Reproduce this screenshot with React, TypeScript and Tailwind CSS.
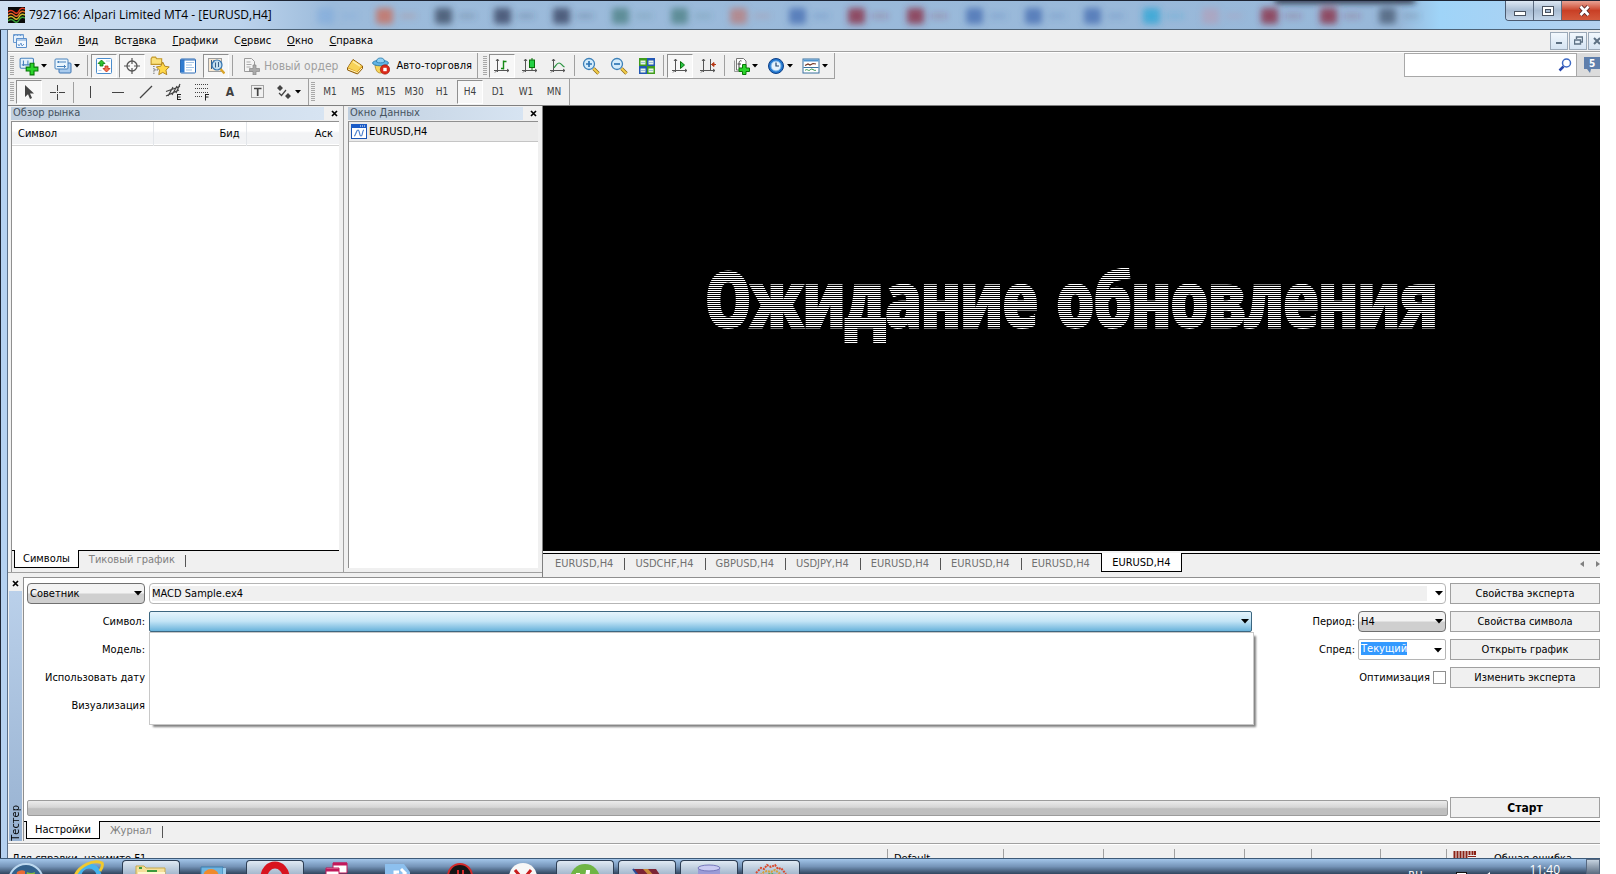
import React, { useState } from "react";

type IconProps = { children: React.ReactNode; size?: number };

function Icon({ children, size = 18 }: IconProps) {
  return (
    <svg width={size} height={size} viewBox="0 0 18 18" fill="none" className="shrink-0" aria-hidden="true">
      {children}
    </svg>
  );
}

function Caret() {
  return (
    <svg width="6" height="4" viewBox="0 0 6 4" className="shrink-0" aria-hidden="true">
      <path d="M0 0h6L3 3.5z" fill="#000" />
    </svg>
  );
}

function ComboArrow() {
  return (
    <svg width="8" height="5" viewBox="0 0 8 5" className="pointer-events-none absolute right-[3px] top-2" aria-hidden="true">
      <path d="M0 0h8L4 4.6z" fill="#000" />
    </svg>
  );
}

function Grip() {
  return (
    <div className="mx-0.5 h-5 w-1 shrink-0 self-center bg-[repeating-linear-gradient(to_bottom,#a8a8a8_0px,#a8a8a8_1px,#f0f0f0_1px,#f0f0f0_2px)]" />
  );
}

function Separator({ wide }: { wide?: boolean }) {
  return <div className={`${wide ? "mx-[3px]" : "mx-px"} h-[21px] w-px shrink-0 self-center bg-[#a0a0a0]`} />;
}

type ToolButtonProps = { label: string; pressed?: boolean; children: React.ReactNode };

function ToolButton({ label, pressed, children }: ToolButtonProps) {
  return (
    <button
      aria-label={label}
      className={`flex h-6 w-[26px] shrink-0 items-center justify-center text-[10px] text-[#404040] ${
        pressed ? "border border-t-[#8f8f8f] border-l-[#8f8f8f] border-r-white border-b-white bg-[#f7f7f7]" : ""
      }`}
    >
      {children}
    </button>
  );
}

function MenuToolButton({ label, children }: { label: string; children: React.ReactNode }) {
  return (
    <button aria-label={label} className="flex h-6 w-[34px] shrink-0 items-center justify-center gap-0.5">
      {children}
      <Caret />
    </button>
  );
}

function Axes() {
  return <path d="M4.500 2v13M1 13.500h15M3 4l1.500-2L6 4M14 12l2 1.500-2 1.500M2 15.500l2-2" stroke="#555" />;
}

const icons = {
  newChart: (
    <Icon size={20}>
      <rect x="1" y="2" width="12" height="9" rx="1" fill="#e4f1fc" stroke="#4a83bd" />
      <path d="M4 4v5M2.500 8h8M8 4v4" stroke="#4a83bd" />
      <path d="M10 6.500h3.500V10H17v3.500h-3.500V17H10v-3.500H6.500V10H10z" fill="#2bd52b" stroke="#067806" />
    </Icon>
  ),
  profiles: (
    <Icon>
      <rect x="5" y="6" width="12" height="10" rx="1" fill="#a9cbee" stroke="#3c74b3" />
      <rect x="1" y="2" width="13" height="10" rx="1" fill="#e8f4fd" stroke="#4a83bd" />
      <path d="M3 5h9M3 9.500h9M4.500 4v2M10.500 8v3" stroke="#4a83bd" />
    </Icon>
  ),
  marketWatch: (
    <Icon>
      <rect x="1.500" y="1.500" width="15" height="15" rx="1" fill="#fff" stroke="#4a8ccc" />
      <path d="M6.500 3 3 6.500h2V9h3V6.500h2z" fill="#31c331" stroke="#0b7d0b" strokeWidth=".8" />
      <path d="m11.500 15 3.500-3.500h-2V9h-3v2.500H8z" fill="#f27654" stroke="#c22f13" strokeWidth=".8" />
      <path d="M11 4h4M3.500 13.500h3" stroke="#b9d3ea" />
    </Icon>
  ),
  crosshair: (
    <Icon>
      <circle cx="9" cy="9" r="5" stroke="#555" strokeWidth="1.300" />
      <path d="M9 1v6M9 11v6M1 9h6M11 9h6" stroke="#555" strokeWidth="1.200" />
    </Icon>
  ),
  favorites: (
    <Icon size={20}>
      <path d="M1 2.500 2 1h3l1 1.500h4.500v5H1z" fill="#fbe27c" stroke="#c29728" />
      <path d="M3.500 9v7M4 12.500h4" stroke="#555" strokeDasharray="1 1" />
      <path d="m11.500 5.500 1.800 3.700 4 .6-2.900 2.900.7 4.100-3.600-2-3.600 2 .7-4.100-2.900-2.900 4-.6z" fill="#ffd84a" stroke="#a87b16" strokeWidth=".8" />
    </Icon>
  ),
  dataWindow: (
    <Icon>
      <rect x="1.500" y="2" width="15" height="14" rx="1" fill="#fff" stroke="#2a6ab5" />
      <path d="M2 2.500h3.500v13H2z" fill="#2f7bd0" />
      <path d="M7 5.500h8M7 8h6M7 10.500h8M7 13h6" stroke="#a3c3e4" />
      <path d="M2 3h14" stroke="#2f6fbb" />
    </Icon>
  ),
  tester: (
    <Icon>
      <rect x="1.500" y="1.500" width="13" height="13" fill="#f9e9d2" stroke="#9e9e9e" />
      <path d="M4.500 3v9M7 3v3" stroke="#355d86" />
      <circle cx="10" cy="8" r="5" fill="#b8dcf6cc" stroke="#3576b4" strokeWidth="1.200" />
      <path d="M8.500 5.500v5M11.500 5v5" stroke="#355d86" />
      <path d="m13.500 12 4 4.500" stroke="#d9a42a" strokeWidth="2.300" />
    </Icon>
  ),
  newOrder: (
    <Icon>
      <path d="M2.500 1.500h7l3 3v10h-10z" fill="#f4f4f4" stroke="#9b9b9b" />
      <path d="M4.500 5h4M4.500 7.500h5M4.500 10h4" stroke="#aaa" />
      <path d="M11 8h3v3.500h3.500v3H14V18h-3v-3.500H7.500v-3H11z" fill="#aaa" stroke="#888" strokeWidth=".7" />
    </Icon>
  ),
  editor: (
    <Icon>
      <path d="M1.500 11 7 2.500 16.500 9v2.500l-5 5.500-10-4z" fill="#dda025" stroke="#8e5e10" />
      <path d="M2 10.500 7 3l9 6-5 5.500z" fill="#f7d257" />
      <path d="m2 12 9.500 3.700L16 11" stroke="#fff4bd" />
      <path d="m7 4.500 7 4.500" stroke="#ffeda3" strokeWidth="1.500" />
    </Icon>
  ),
  autoTrading: (
    <Icon>
      <path d="M3 8h11c0 5-2 8-5.500 8S3.500 13 3 8z" fill="#f7d55b" stroke="#b0861d" strokeWidth=".8" />
      <ellipse cx="8.500" cy="6" rx="8" ry="2.800" fill="#62b4e4" stroke="#2577aa" strokeWidth=".8" />
      <path d="M4.500 5c0-3 1.500-4 4-4s4 1 4 4c-2 1.200-6 1.200-8 0z" fill="#8fd0f4" stroke="#2577aa" strokeWidth=".8" />
      <circle cx="13" cy="12.500" r="4.700" fill="#dc2a1a" stroke="#991509" strokeWidth=".6" />
      <rect x="11.300" y="10.800" width="3.400" height="3.400" fill="#fff" />
    </Icon>
  ),
  bars: (
    <Icon>
      <Axes />
      <path d="M10.500 3.500v9M10.500 4.500h3M8 11.500h2.500" stroke="#168a16" strokeWidth="1.400" />
    </Icon>
  ),
  candles: (
    <Icon>
      <Axes />
      <path d="M11 1v12" stroke="#087008" />
      <rect x="8.500" y="3" width="5" height="7.500" fill="#24d045" stroke="#087008" />
    </Icon>
  ),
  line: (
    <Icon>
      <Axes />
      <path d="M4.500 11c2-1 3-5 5.500-5s3 3 5.500 4" stroke="#2b9442" strokeWidth="1.200" />
    </Icon>
  ),
  zoomIn: (
    <Icon>
      <circle cx="7" cy="7" r="5.500" fill="#d4ecfb" stroke="#3d80b8" strokeWidth="1.300" />
      <path d="M7 4v6M4 7h6" stroke="#2f76b5" strokeWidth="1.700" />
      <path d="m11.500 11.500 5 5" stroke="#8e6a16" strokeWidth="3.400" />
      <path d="m11.500 11.500 5 5" stroke="#f3cf4b" strokeWidth="2" />
    </Icon>
  ),
  zoomOut: (
    <Icon>
      <circle cx="7" cy="7" r="5.500" fill="#d4ecfb" stroke="#3d80b8" strokeWidth="1.300" />
      <path d="M4 7h6" stroke="#2f76b5" strokeWidth="1.700" />
      <path d="m11.500 11.500 5 5" stroke="#8e6a16" strokeWidth="3.400" />
      <path d="m11.500 11.500 5 5" stroke="#f3cf4b" strokeWidth="2" />
    </Icon>
  ),
  tile: (
    <Icon>
      <path d="M1 1h8v8H1zM9 9h8v8H9z" fill="#3f9c1c" />
      <path d="M9 1h8v8H9zM1 9h8v8H1z" fill="#2257b4" />
      <path d="M2.500 3.500h5v4h-5zM10.500 3.500h5v4h-5zM2.500 11.500h5v4h-5zM10.500 11.500h5v4h-5z" fill="#eaf5e6" />
      <path d="M3 5.500h4M11 5.500h4M3 13.500h4M11 13.500h4" stroke="#9fc0d8" />
    </Icon>
  ),
  autoScroll: (
    <Icon>
      <Axes />
      <path d="m9.500 4.500 4 3.500-4 3.500z" fill="#26c646" stroke="#087008" />
    </Icon>
  ),
  shift: (
    <Icon>
      <Axes />
      <path d="M11.500 2v11" stroke="#555" />
      <path d="M17 7.500h-4.500M15 5.500l-2.500 2 2.500 2z" fill="#b73916" stroke="#b73916" />
    </Icon>
  ),
  indicators: (
    <Icon>
      <path d="M4.500 1.500h7L14 4v9H4.500z" fill="#fff" stroke="#777" />
      <path d="M2.500 3.500v11h8" stroke="#999" />
      <path d="M9.500 4c-2-1-2.500 1-2.500 3v4M5.500 7H9" stroke="#444" />
      <path d="M10.500 7.500H14V11h3.500v3.500H14V17.500h-3.500v-3H7V11h3.500z" fill="#2bd52b" stroke="#067806" />
    </Icon>
  ),
  periods: (
    <Icon>
      <circle cx="9" cy="9" r="7.500" fill="#2277cf" stroke="#0e3f86" />
      <circle cx="9" cy="9" r="5" fill="#e5f3fd" stroke="#79b4e8" />
      <path d="M9 5.500V9h3" stroke="#24466d" strokeWidth="1.200" />
    </Icon>
  ),
  templates: (
    <Icon>
      <rect x="1" y="2" width="16" height="14" fill="#fff" stroke="#39719f" />
      <path d="M1.500 3.500h15" stroke="#4f95d0" strokeWidth="2" />
      <path d="M3 8.500 6 7l2 1 3-1.500 3 .5" stroke="#6d3322" strokeWidth="1.200" />
      <path d="M1.500 10.500h15" stroke="#39719f" />
      <path d="M3 13.500c2-2 3 0 4 0s2-2.500 4-1 2 .5 3 1" stroke="#2a9440" />
    </Icon>
  ),
  cursor: (
    <Icon>
      <path d="M5 2v12l3-2.800L10 16l2-1-2-4.500h4z" fill="#444" />
    </Icon>
  ),
  cross: (
    <Icon>
      <path d="M9.500 2v6M9.500 11v6M2 9.500h6M11 9.500h6" stroke="#444" />
      <path d="M9 9h1v1H9z" fill="#444" />
    </Icon>
  ),
  vline: (
    <Icon>
      <path d="M9.500 3v12" stroke="#444" />
    </Icon>
  ),
  hline: (
    <Icon>
      <path d="M3 9.500h12" stroke="#444" />
    </Icon>
  ),
  trend: (
    <Icon>
      <path d="M3 15 15 3" stroke="#444" strokeWidth="1.200" />
    </Icon>
  ),
  channel: (
    <Icon>
      <path d="m1 8.500 14-5M1 13l13-6M3 13 8 4M7 12l5-9M11 10l4-9" stroke="#444" strokeWidth="1.200" />
      <path d="M12.500 11v6M12 11.500h4M12 14h3.500M12 16.500h4" stroke="#222" />
    </Icon>
  ),
  fibo: (
    <Icon>
      <path d="M2 1.500h14M2 5.500h14M2 9.500h14M2 13.500h8" stroke="#444" strokeDasharray="1 1" />
      <path d="M12.500 11v6.500M12 11.500h4M12 14h3.500" stroke="#222" />
    </Icon>
  ),
  label: (
    <Icon>
      <rect x="2.500" y="2.500" width="12" height="12" stroke="#555" strokeDasharray="1 1" />
      <path d="M5 5.500h7.500M8.700 5v8" stroke="#444" strokeWidth="1.700" />
    </Icon>
  ),
  arrows: (
    <Icon>
      <path d="m5 2 3 3-3 3-3-3zM13 10l3 3-3 3-3-3z" fill="#444" />
      <path d="m4 10 2.500 2.500L11 7" stroke="#444" strokeWidth="1.200" />
    </Icon>
  ),
};

const menus = [
  ["", "Ф", "айл"],
  ["", "В", "ид"],
  ["Вст", "а", "вка"],
  ["", "Г", "рафики"],
  ["С", "е", "рвис"],
  ["", "О", "кно"],
  ["", "С", "правка"],
];

const timeframes = ["M1", "M5", "M15", "M30", "H1", "H4", "D1", "W1", "MN"];

const chartTabs = ["EURUSD,H4", "USDCHF,H4", "GBPUSD,H4", "USDJPY,H4", "EURUSD,H4", "EURUSD,H4", "EURUSD,H4", "EURUSD,H4"];

// Colours of the browser bookmarks that shine through the glass title bar
const glass = [
  "#6f9fdc", "#c8705f", "#3f5068", "#3b4766", "#3b4766", "#4f8288", "#4f8288", "#b87f80", "#4a72b4",
  "#8c2f48", "#8c2f48", "#4a72b4", "#4a72b4", "#4a72b4", "#2fa6d6", "#c58ba2", "#8c2f48", "#8c2f48", "#4c5f78",
];

function TitleBar() {
  return (
    <header className="relative flex h-[30px] shrink-0 items-start justify-between overflow-hidden border-t border-b border-t-[#1d2433] border-b-[#4d6276] bg-[linear-gradient(to_right,#cfe0f2_0px,#bcd3ec_240px,#9cbbdb_330px,#98b8d9_1400px,#9fd4f8_1440px,#b3d0ef)]">
      <svg className="absolute inset-0 h-full w-full" aria-hidden="true">
        <defs>
          <filter id="soft" x="-50%" y="-50%" width="200%" height="200%">
            <feGaussianBlur stdDeviation="3" />
          </filter>
        </defs>
        <g filter="url(#soft)">
          {glass.map((color, i) => (
            <g key={i} fill={color}>
              <rect x={317 + i * 59} y="7" width="17" height="16" rx="3" opacity={i === 0 || i === 15 ? 0.4 : 0.8} />
              <rect x={341 + i * 59} y="13" width="16" height="4" opacity="0.3" />
            </g>
          ))}
          <rect x="1275" y="-4" width="140" height="6" fill="#1d2433" />
        </g>
      </svg>
      <div className="relative flex items-center gap-1 pl-2 pt-1.5">
        <svg width="17" height="16" viewBox="0 0 17 16" aria-hidden="true">
          <path d="M0 0h17v16H0z" fill="#0a0a0a" />
          <path d="M0 5q3-3 6 0t5-1 6-2" stroke="#e33b22" strokeWidth="1.500" fill="none" />
          <path d="M0 8q3-3 6 0t5-1 6-2" stroke="#e96e28" strokeWidth="1.500" fill="none" />
          <path d="M0 11q3-3 6 0t5-1 6-2" stroke="#c8bd2e" strokeWidth="1.500" fill="none" />
          <path d="M0 14q3-3 6 0t5-1 6-2" stroke="#3ca33a" strokeWidth="1.500" fill="none" />
        </svg>
        <h1 className="font-['Open_Sans',sans-serif] text-xs leading-4 text-black">
          7927166: Alpari Limited MT4 - [EURUSD,H4]
        </h1>
      </div>
      <div className="relative flex h-5 overflow-hidden rounded-bl border-b border-l border-[#4b5a70]">
        <button aria-label="Свернуть" className="flex w-7 items-center justify-center border-r border-[#5c6b80] bg-linear-to-b from-[#dde8f4] via-[#a9bcd3] to-[#c4d6ea]">
          <svg width="12" height="12" aria-hidden="true">
            <rect x=".5" y="6.500" width="11" height="4" fill="#fff" stroke="#4a5361" />
          </svg>
        </button>
        <button aria-label="Развернуть" className="flex w-7 items-center justify-center border-r border-[#5c6b80] bg-linear-to-b from-[#dde8f4] via-[#a9bcd3] to-[#c4d6ea]">
          <svg width="12" height="10" aria-hidden="true">
            <rect x=".5" y=".5" width="11" height="9" fill="#fff" stroke="#4a5361" />
            <rect x="3.500" y="3.500" width="5" height="3" fill="#a9bcd3" stroke="#4a5361" />
          </svg>
        </button>
        <button aria-label="Закрыть" className="flex w-[38px] items-center justify-center bg-linear-to-b from-[#e8a294] via-[#c93f25] to-[#d4593c] pl-2">
          <svg width="14" height="12" viewBox="0 0 14 12" aria-hidden="true">
            <path d="m2.500 1.500 8 8.500m0-8.500-8 8.500" stroke="#5b2a2a" strokeWidth="4.500" />
            <path d="m2.500 1.500 8 8.500m0-8.500-8 8.500" stroke="#fff" strokeWidth="2.700" />
          </svg>
        </button>
      </div>
    </header>
  );
}

function MenuBar() {
  const box = "flex h-[18px] items-center justify-center border border-[#9ba9b8] bg-linear-to-b from-[#f2f8fd] to-[#d5e4f3]";
  return (
    <nav className="flex h-[22px] shrink-0 items-center justify-between border-b border-[#a0a0a0] pl-1">
      <div className="flex items-center">
        <svg width="16" height="16" viewBox="0 0 16 16" fill="none" className="mr-[7px]" aria-hidden="true">
          <path d="M1.500 1.500h10v8h-10z" fill="#e6f1fc" stroke="#6d9bd0" />
          <path d="M1.500 2.500h10" stroke="#6d9bd0" strokeDasharray="2 1" />
          <path d="M4.500 5.500h10v9h-10z" fill="#f2f8ff" stroke="#5b8fcb" />
          <path d="M5 7h9M6 11l1 2 2-3 1 3 2-2" stroke="#6d9bd0" />
        </svg>
        <div className="flex gap-4">
          {menus.map(([before, key, after]) => (
            <button key={key + after} className="leading-5">
              {before}
              <u>{key}</u>
              {after}
            </button>
          ))}
        </div>
      </div>
      <div className="flex gap-px overflow-hidden">
        <button aria-label="Свернуть окно" className={`${box} w-[18px]`}>
          <svg width="8" height="8" aria-hidden="true"><path d="M1 5h6v2H1z" fill="#5d7184" /></svg>
        </button>
        <button aria-label="Восстановить окно" className={`${box} w-[18px]`}>
          <svg width="9" height="9" fill="none" aria-hidden="true">
            <path d="M2.500 3V1h6v5H7M.5 4h6v4h-6z" stroke="#5d7184" strokeWidth="1.400" />
          </svg>
        </button>
        <button aria-label="Закрыть окно" className={`${box} w-[12px] border-r-0 pl-1`}>
          <svg width="8" height="8" aria-hidden="true"><path d="m1 1 6 6m0-6L1 7" stroke="#5d7184" strokeWidth="2" /></svg>
        </button>
      </div>
    </nav>
  );
}

function StandardToolbar() {
  return (
    <div className="flex h-[27px] shrink-0 items-start justify-between border-t border-white">
      <div className="flex h-[26px] items-center border-r border-b border-[#a0a0a0] pr-0.5">
        <div className="flex h-full items-center border-r border-[#a0a0a0] pr-[5px]">
          <Grip />
          <MenuToolButton label="Новый график">{icons.newChart}</MenuToolButton>
          <MenuToolButton label="Профили">{icons.profiles}</MenuToolButton>
          <Separator wide />
          <div className="flex gap-0.5">
            <ToolButton label="Обзор рынка" pressed>{icons.marketWatch}</ToolButton>
            <ToolButton label="Окно данных" pressed>{icons.crosshair}</ToolButton>
            <ToolButton label="Навигатор">{icons.favorites}</ToolButton>
            <ToolButton label="Терминал">{icons.dataWindow}</ToolButton>
            <ToolButton label="Тестер стратегий" pressed>{icons.tester}</ToolButton>
          </div>
          <Separator wide />
          <button className="mr-1 ml-1.5 flex items-center gap-1 text-xs text-[#a0a0a0]">
            {icons.newOrder}
            Новый ордер
          </button>
          <ToolButton label="MetaEditor">{icons.editor}</ToolButton>
          <button className="ml-1 flex items-center gap-1.5">
            {icons.autoTrading}
            Авто-торговля
          </button>
        </div>
        <div className="pl-[3px]">
          <Grip />
        </div>
        <div className="flex gap-0.5">
          <ToolButton label="Бары" pressed>{icons.bars}</ToolButton>
          <ToolButton label="Свечи">{icons.candles}</ToolButton>
          <ToolButton label="Линия">{icons.line}</ToolButton>
          <Separator />
          <ToolButton label="Увеличить">{icons.zoomIn}</ToolButton>
          <ToolButton label="Уменьшить">{icons.zoomOut}</ToolButton>
          <ToolButton label="Расположить окна">{icons.tile}</ToolButton>
          <Separator />
          <ToolButton label="Автопрокрутка" pressed>{icons.autoScroll}</ToolButton>
          <ToolButton label="Сдвиг графика">{icons.shift}</ToolButton>
        </div>
        <Separator wide />
        <div className="flex gap-px">
          <MenuToolButton label="Индикаторы">{icons.indicators}</MenuToolButton>
          <MenuToolButton label="Периоды">{icons.periods}</MenuToolButton>
          <MenuToolButton label="Шаблоны">{icons.templates}</MenuToolButton>
        </div>
      </div>
      <div className="flex h-6 shrink-0">
        <label className="flex w-[173px] items-center border border-[#a8a8a8] bg-white pr-1">
          <input type="search" aria-label="Поиск" className="min-w-0 flex-1 px-1 outline-none" />
          <svg width="14" height="14" viewBox="0 0 14 14" fill="none" aria-hidden="true">
            <circle cx="8.500" cy="5" r="4" stroke="#3f6bc4" strokeWidth="1.500" />
            <path d="M5.500 8.500 1.500 12.500" stroke="#2747ad" strokeWidth="2.500" />
          </svg>
        </label>
        <button aria-label="Сообщения: 5" className="flex w-[23px] items-center justify-end border-b border-[#a8a8a8] bg-[#dcdcdc]">
          <svg width="17" height="17" viewBox="0 0 17 17" aria-hidden="true">
            <path d="M1 1h16v12H8l-1 4-3-4H1z" fill="#5f7fac" />
            <text x="6" y="11" fontSize="10" fontWeight="bold" fill="#fff">5</text>
          </svg>
        </button>
      </div>
    </div>
  );
}

function DrawingToolbar() {
  const [active, setActive] = useState("H4");
  return (
    <div className="flex h-[27px] shrink-0 border-b border-[#808080]">
      <div className="flex items-center border-r border-[#a0a0a0] pr-[3px]">
        <Grip />
        <div className="flex gap-0.5">
          <ToolButton label="Курсор" pressed>{icons.cursor}</ToolButton>
          <ToolButton label="Перекрестие">{icons.cross}</ToolButton>
          <Separator />
          <ToolButton label="Вертикальная линия">{icons.vline}</ToolButton>
          <ToolButton label="Горизонтальная линия">{icons.hline}</ToolButton>
          <ToolButton label="Трендовая линия">{icons.trend}</ToolButton>
          <ToolButton label="Канал">{icons.channel}</ToolButton>
          <ToolButton label="Фибоначчи">{icons.fibo}</ToolButton>
          <ToolButton label="Текст"><span className="text-xs font-bold">A</span></ToolButton>
          <ToolButton label="Метка">{icons.label}</ToolButton>
        </div>
        <MenuToolButton label="Стрелки">{icons.arrows}</MenuToolButton>
      </div>
      <div className="flex items-center border-r border-[#a0a0a0] pr-0.5">
        <Grip />
        <div className="flex gap-0.5">
          {timeframes.map((tf) => (
            <button
              key={tf}
              onClick={() => setActive(tf)}
              className={`h-6 w-[26px] text-[10px] text-[#404040] ${
                tf === active ? "border border-t-[#8f8f8f] border-l-[#8f8f8f] border-r-white border-b-white bg-[#f7f7f7]" : ""
              }`}
            >
              {tf}
            </button>
          ))}
        </div>
      </div>
    </div>
  );
}

function CloseMark() {
  return (
    <svg width="7" height="7" viewBox="0 0 7 7" aria-hidden="true">
      <path d="m1 1 5 5m0-5-5 5" stroke="#000" strokeWidth="1.700" />
    </svg>
  );
}

function PaneTitle({ children }: { children: React.ReactNode }) {
  return (
    <div className="flex h-[15px] shrink-0 items-center gap-1.5">
      <h2 className="h-[13px] flex-1 bg-linear-to-r from-[#c0cfdf] to-[#d7e4f2] pl-0.5 leading-3 text-[#46535f]">
        {children}
      </h2>
      <button aria-label="Закрыть панель" className="px-px">
        <CloseMark />
      </button>
    </div>
  );
}

function MarketWatch() {
  return (
    <section className="mb-1 flex w-[336px] shrink-0 flex-col border-r border-b border-[#a0a0a0] pr-1 pl-[3px]">
      <PaneTitle>Обзор рынка</PaneTitle>
      <div className="flex flex-1 flex-col border-t border-l border-[#8f8f8f]">
        <div className="flex-1 bg-white">
          <table className="w-full table-fixed border-collapse">
            <thead>
              <tr className="h-[23px] border-b border-[#d5d5d5] bg-linear-to-b from-white from-40% to-[#f2f3f5] to-50%">
                <th className="border-r border-[#e3e6ea] pt-0.5 pl-1.5 text-left font-normal">Символ</th>
                <th className="w-[93px] border-r border-[#e3e6ea] pt-0.5 pr-1.5 text-right font-normal">Бид</th>
                <th className="w-[93px] pt-0.5 pr-1.5 text-right font-normal">Аск</th>
              </tr>
            </thead>
          </table>
        </div>
        <div className="flex h-[22px] shrink-0 border-t border-black pl-0.5">
          <button className="-mt-px h-[18px] border border-t-0 border-black bg-white px-2">Символы</button>
          <button className="h-[18px] px-2.5 text-[#808080]">Тиковый график</button>
          <span className="mt-1 h-3 w-px bg-[#555]" />
        </div>
      </div>
    </section>
  );
}

function DataWindow() {
  return (
    <section className="mb-1 flex w-[198px] shrink-0 flex-col border-b border-[#a0a0a0] pr-1 pl-1">
      <PaneTitle>Окно Данных</PaneTitle>
      <div className="mb-1 flex-1 border-t border-l border-[#8f8f8f] bg-white">
        <div className="flex h-5 items-center gap-0.5 border-b border-[#c5c5c5] bg-[#ebebeb] pl-0.5">
          <svg width="16" height="15" viewBox="0 0 16 15" fill="none" aria-hidden="true">
            <rect x=".5" y=".5" width="15" height="14" fill="#fff" stroke="#1b55b3" />
            <path d="M0 0h16v4H0z" fill="#1c5cc7" />
            <path d="M9 2h1M11 2h1M13 2h1" stroke="#fff" />
            <path d="M3 12c2 0 2-6 4-6s1 6 3 6 1-6 3-6" stroke="#4d82cf" strokeWidth="1.200" />
          </svg>
          <span>EURUSD,H4</span>
        </div>
      </div>
    </section>
  );
}

function Chart() {
  const last = chartTabs.length - 1;
  return (
    <section className="flex min-w-0 flex-1 flex-col border-l border-[#808080]">
      <div className="flex flex-1 items-center justify-center border-b-2 border-[#f4f4f4] bg-black pb-[62px]">
        <p className="bg-[repeating-linear-gradient(to_bottom,#fff_0px,#fff_1px,#000_1px,#000_2px)] bg-clip-text font-['Impact','Open_Sans_Condensed',sans-serif] text-[76px] leading-[96px] font-black whitespace-nowrap text-transparent [-webkit-text-stroke:3px_transparent]">
          Ожидание обновления
        </p>
      </div>
      <div className="flex h-6 shrink-0 justify-between border-t border-black">
        <div className="flex">
          {chartTabs.map((tab, i) =>
            i === last ? (
              <button key={i} className="-mt-px h-[19px] w-[81px] border border-t-0 border-black bg-white pt-px">
                {tab}
              </button>
            ) : (
              <div key={i} className="flex h-[19px] items-center text-[#707070]">
                <button className={i === 0 ? "pr-[11px] pl-3" : "pr-[11px] pl-[10px]"}>{tab}</button>
                {i < last - 1 && <span className="h-3 w-px bg-[#555]" />}
              </div>
            )
          )}
        </div>
        <div className="flex items-center gap-3 overflow-hidden pb-1">
          <svg width="4" height="6" aria-hidden="true"><path d="M4 0v6L0 3z" fill="#808080" /></svg>
          <svg width="4" height="6" aria-hidden="true"><path d="M0 0v6l4-3z" fill="#808080" /></svg>
        </div>
      </div>
    </section>
  );
}

const grayCombo =
  "block h-[21px] w-full appearance-none rounded-sm border border-[#707070] bg-linear-to-b from-[#f3f3f3] from-45% to-[#cfcfcf] to-55% px-0.5";
const pushButton = "h-[21px] border border-[#a0a0a0] bg-[#f0f0f0]";

function Tester() {
  const [optimize, setOptimize] = useState(false);
  return (
    <section className="flex shrink-0 border-b border-[#a0a0a0] pb-0.5">
      <div className="flex w-[15px] shrink-0 flex-col items-center">
        <button aria-label="Закрыть тестер" className="flex h-[14px] items-center pb-px">
          <CloseMark />
        </button>
        <div className="flex w-[13px] flex-1 items-end justify-center bg-linear-to-b from-[#bad0ea] to-[#98b2d1]">
          <h2 className="rotate-180 leading-3 [writing-mode:vertical-rl]">Тестер</h2>
        </div>
      </div>
      <div className="min-w-0 flex-1 border-t border-l border-[#8f8f8f]">
        <div className="bg-white pt-[5px] pb-[3px] pl-[3px]">
          <div className="grid grid-cols-[118px_minmax(0,1fr)_190px_150px] items-center gap-x-1 gap-y-[7px]">
            <div className="relative">
              <select aria-label="Тип" className={grayCombo}>
                <option>Советник</option>
              </select>
              <ComboArrow />
            </div>
            <div className="relative col-span-2">
              <div className="flex h-[21px] rounded-sm border border-[#b5b5b5] bg-white p-0.5">
                <select aria-label="Советник" className="mr-4 flex-1 appearance-none bg-[#f0f0f0] leading-[15px]">
                  <option>MACD Sample.ex4</option>
                </select>
              </div>
              <ComboArrow />
            </div>
            <button className={pushButton}>Свойства эксперта</button>

            <label htmlFor="symbol" className="text-right">Символ:</label>
            <div className="relative">
              <select
                id="symbol"
                className="block h-[21px] w-full appearance-none rounded-xs border border-[#3c6680] bg-linear-to-b from-[#e5f4fc] from-0% via-[#c4e5f6] via-48% to-[#68b3db] px-1"
              />
              <ComboArrow />
              <div className="absolute top-[21px] right-[-2px] left-0 z-10 h-[93px] border border-[#c8c8c8] bg-white shadow-[3px_3px_2px_-1px_#808080]" />
            </div>
            <div className="flex items-center justify-end gap-[3px]">
              <label htmlFor="period">Период:</label>
              <div className="relative w-[88px]">
                <select id="period" className={grayCombo}>
                  <option>H4</option>
                </select>
                <ComboArrow />
              </div>
            </div>
            <button className={pushButton}>Свойства символа</button>

            <span className="text-right">Модель:</span>
            <span />
            <div className="flex items-center justify-end gap-[3px]">
              <label htmlFor="spread">Спред:</label>
              <div className="relative h-[21px] w-[88px] rounded-xs border border-[#b5b5b5] bg-white p-0.5">
                <input id="spread" defaultValue="Текущий" className="block h-[13px] w-[46px] bg-[#3399ff] text-white outline-none" />
                <ComboArrow />
              </div>
            </div>
            <button className={pushButton}>Открыть график</button>

            <span className="text-right">Использовать дату</span>
            <span />
            <label className="flex items-center justify-end gap-[3px]">
              Оптимизация
              <input
                type="checkbox"
                checked={optimize}
                onChange={(e) => setOptimize(e.target.checked)}
                className="size-[13px] appearance-none border border-[#909090] bg-white checked:bg-[#3399ff]"
              />
            </label>
            <button className={pushButton}>Изменить эксперта</button>

            <span className="h-[21px] text-right leading-[21px]">Визуализация</span>
          </div>
          <div className="mt-[81px] flex items-center gap-0.5">
            <div
              role="progressbar"
              aria-label="Прогресс"
              className="h-4 flex-1 rounded-xs border border-[#9c9c9c] bg-linear-to-b from-[#ececec] via-[#d6d6d6] via-45% to-[#bfbfbf] to-55%"
            />
            <button className={`${pushButton} w-[150px] text-xs font-bold`}>Старт</button>
          </div>
        </div>
        <div className="flex h-[20px] border-t border-black pl-0.5">
          <button className="-mt-px h-[18px] border border-t-0 border-black bg-white px-2">Настройки</button>
          <button className="h-[18px] px-2.5 text-[#808080]">Журнал</button>
          <span className="mt-1 h-3 w-px bg-[#555]" />
        </div>
      </div>
    </section>
  );
}

function StatusBar() {
  const cell = "mt-1 border-l border-[#a0a0a0]";
  return (
    <footer className="flex h-[14px] shrink-0 items-start overflow-hidden border-t border-white pl-1">
      <span className="flex-1 pt-1.5">Для справки, нажмите F1</span>
      <div className={`${cell} w-[116px] pt-0.5 pl-1.5`}>Default</div>
      <div className={`${cell} h-3 w-[100px]`} />
      <div className={`${cell} h-3 w-[71px]`} />
      <div className={`${cell} h-3 w-[70px]`} />
      <div className={`${cell} h-3 w-[67px]`} />
      <div className={`${cell} h-3 w-[69px]`} />
      <div className={`${cell} h-3 w-[66px]`} />
      <div className={`${cell} flex w-[154px] gap-[18px] pt-0.5 pl-1.5`}>
        <svg width="23" height="11" aria-hidden="true">
          <path d="M1.500 0v9M4.500 0v9M7.500 0v9M10.500 0v7M13.500 0v7M16.500 0v4M19.500 0v4M22 0v4" stroke="#8c2317" strokeWidth="2" />
          <path d="M9 8.500h5M15 5.500h8M15 8.500h8" stroke="#8c2317" />
        </svg>
        Общая ошибка
      </div>
    </footer>
  );
}

const tasks = [
  { name: "Internet Explorer", open: false, art: <><circle cx="16" cy="16" r="10" stroke="#46b4ee" strokeWidth="5" fill="none" /><path d="M2 16C6 6 20-1 29 3c1 2 0 5-2 8" stroke="#f0c930" strokeWidth="3" fill="none" /></> },
  { name: "Проводник", open: true, art: <><path d="M1 5h8l2 2h19v12H1z" fill="#f4e09a" stroke="#c9a84b" /><path d="M4 7h3M12 10h10" stroke="#3c9a3c" strokeWidth="2" /><path d="M3 12h27" stroke="#fff6cf" strokeWidth="2" /></> },
  { name: "Media Player", open: false, art: <><path d="M4 7h22v12H4z" fill="#6fb5e0" stroke="#3b7fb0" /><path d="M26 8h3v11h-3z" fill="#9fd0ef" /><circle cx="14" cy="17" r="8" fill="#f08a2b" /></> },
  { name: "Opera", open: true, art: <ellipse cx="16" cy="16" rx="11" ry="12" stroke="#d8141f" strokeWidth="7" fill="none" /> },
  { name: "Документы", open: false, art: <><path d="M12 3h14v10H12z" fill="#fff" stroke="#c2185b" /><path d="M12 4h14" stroke="#c2185b" strokeWidth="3" /><path d="M5 8h13v10H5z" fill="#fff" stroke="#c2185b" /><path d="M5 10h13" stroke="#c2185b" strokeWidth="3" /></> },
  { name: "Синхронизация", open: false, art: <><path d="M2 4h19l6 8v10H2z" fill="#8dc0ee" /><path d="M12 16v-4h4M18 9l4 4-4 4" stroke="#fff" strokeWidth="3" fill="none" /></> },
  { name: "Плеер", open: false, art: <><circle cx="15" cy="16" r="12" fill="#151515" stroke="#d42b2b" strokeWidth="2" /><path d="M13 10v8M18 10v8" stroke="#d42b2b" strokeWidth="2" /></> },
  { name: "Браузер", open: false, art: <><circle cx="16" cy="17" r="14" fill="#f7f7f7" /><path d="m8 10 5 6M24 10l-5 6" stroke="#c81e1e" strokeWidth="3" /></> },
  { name: "Торрент", open: true, art: <><circle cx="16" cy="18" r="15" fill="#6fb544" /><path d="M9 12c0 8 10 8 10-3" stroke="#fff" strokeWidth="4" fill="none" /></> },
  { name: "Архиватор", open: true, art: <><path d="M2 8h23l6 9H8z" fill="#7c2435" /><path d="M12 8h5l8 9h-5z" fill="#c98a3a" /><path d="m2 8 7 9" stroke="#2d4d9a" strokeWidth="2" /></> },
  { name: "База данных", open: true, art: <><path d="M5 7v12h22V7z" fill="#9a9bd6" /><ellipse cx="16" cy="7" rx="11" ry="3" fill="#c9caf2" stroke="#7678bb" /></> },
  { name: "MetaTrader", open: true, art: <><path d="m1 12 5-5 3 1 3-4 4 2 4-2 3 4 3-1 5 6" stroke="#d94a2f" strokeWidth="2" fill="none" strokeDasharray="2 1" /><path d="m3 16 6-5 3-1 4 1 4-2 4 3 5 4" stroke="#d8a03a" strokeWidth="2" fill="none" strokeDasharray="2 1" /><path d="m9 17 4-4h6l5 4" stroke="#5cae5c" strokeWidth="2" fill="none" strokeDasharray="2 1" /></> },
];

function Taskbar() {
  return (
    <div className="flex h-4 shrink-0 items-start justify-between overflow-hidden border-t border-[#3d5a78] bg-linear-to-b from-[#a3c6ea] via-[#7594b8] via-50% to-[#31465f]">
      <div className="flex">
        <button aria-label="Пуск" className="mr-2 w-[52px]">
          <svg width="52" height="16" aria-hidden="true">
            <circle cx="26" cy="19" r="17" fill="#33618c" stroke="#bcd8ef" strokeWidth="2" />
            <path d="M17 10q4-3 8-1v6h-9z" fill="#ea6a32" />
            <path d="M27 10q4 2 8 0l-1 6h-8z" fill="#84bb3c" />
          </svg>
        </button>
        <div className="flex gap-1 pt-px">
          {tasks.map((task) => (
            <button
              key={task.name}
              aria-label={task.name}
              className={`flex h-5 w-[58px] justify-center ${
                task.open ? "rounded-t border border-b-0 border-[#2d3e54] bg-linear-to-b from-[#dfe9f3] to-[#8ba3bd]" : ""
              }`}
            >
              <svg width="32" height="20" aria-hidden="true">{task.art}</svg>
            </button>
          ))}
        </div>
      </div>
      <div className="flex items-start text-white">
        <span className="mr-[34px] pt-[9px]">RU</span>
        <svg width="11" height="16" className="mr-[18px]" aria-hidden="true"><rect x=".5" y="13.500" width="10" height="5" fill="#fff" stroke="#111" /></svg>
        <svg width="6" height="16" className="mr-[38px]" aria-hidden="true"><path d="M5 13v3H1z" fill="#fff" /></svg>
        <time className="mr-[26px] pt-[3px] font-['Open_Sans',sans-serif] text-xs leading-4">11:40</time>
        <button aria-label="Показать рабочий стол" className="h-4 w-[14px] border border-[#56687f] bg-linear-to-b from-[#c6d3e0] to-[#5b6c80]" />
      </div>
    </div>
  );
}

function App() {
  return (
    <div className="flex h-screen flex-col overflow-hidden bg-white pr-4 font-['DejaVu_Sans_Condensed','DejaVu_Sans',sans-serif] text-[11px] leading-4 text-black">
      <TitleBar />
      <div className="flex min-h-0 flex-1">
        <div className="w-2 shrink-0 border-r border-l border-r-[#5b6f88] border-l-[#1d2433] bg-[#b5d1f0]" />
        <main className="flex min-w-0 flex-1 flex-col bg-[#f0f0f0]">
          <MenuBar />
          <StandardToolbar />
          <DrawingToolbar />
          <div className="flex min-h-0 flex-1">
            <MarketWatch />
            <DataWindow />
            <Chart />
          </div>
          <Tester />
          <StatusBar />
        </main>
      </div>
      <Taskbar />
    </div>
  );
}

export default App;
